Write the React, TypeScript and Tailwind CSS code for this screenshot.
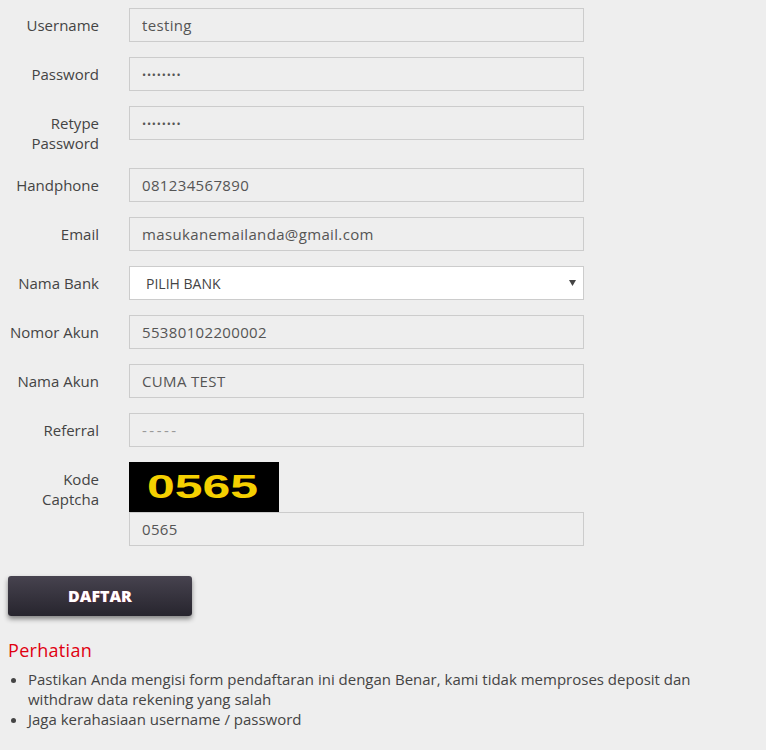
import React from "react";

const font = { fontFamily: '"Open Sans", "Liberation Sans", sans-serif' };

function Row({ label, children }: { label: React.ReactNode; children: React.ReactNode }) {
  return (
    <div className="flex gap-[30px] mb-[15px]">
      <div className="w-[99px] shrink-0 text-right pt-[7px] text-[15px] leading-[20px] text-[#444] whitespace-nowrap">{label}</div>
      <div className="w-[455px]">{children}</div>
    </div>
  );
}

function Field({ value, type = "text", placeholder, extra = "" }: { value?: string; type?: string; placeholder?: string; extra?: string }) {
  return (
    <input
      type={type}
      readOnly
      value={value ?? ""}
      placeholder={placeholder}
      className={"block w-full h-[34px] px-[12px] bg-[#eeeeee] border border-[#cccccc] text-[#555] placeholder:text-[#999] outline-none " + extra}
      style={font}
    />
  );
}

const txt = "text-[15px] tracking-[0.35px]";
const pw = "text-[11px] tracking-[0.8px]";

export default function App() {
  return (
    <div className="min-h-[750px] w-[766px] bg-[#eeeeee] pt-[8px]" style={font}>
      <Row label="Username"><Field value="testing" extra={txt} /></Row>
      <Row label="Password"><Field type="password" value="testing1" extra={pw} /></Row>
      <Row label={<>Retype<br />Password</>}><Field type="password" value="testing1" extra={pw} /></Row>
      <Row label="Handphone"><Field value="081234567890" extra={txt} /></Row>
      <Row label="Email"><Field value="masukanemailanda@gmail.com" extra={txt} /></Row>
      <Row label="Nama Bank">
        <div className="relative h-[34px] w-full bg-white border border-[#cccccc] flex items-center pl-[16px] text-[14px] text-[#444]">
          PILIH BANK
          <svg className="absolute right-[7px] top-[13px]" width="7" height="6" viewBox="0 0 7 6">
            <path d="M0 0 H7 L3.5 6 Z" fill="#444" />
          </svg>
        </div>
      </Row>
      <Row label="Nomor Akun"><Field value="55380102200002" extra={txt} /></Row>
      <Row label="Nama Akun"><Field value="CUMA TEST" extra={txt} /></Row>
      <Row label="Referral"><Field placeholder="-----" extra={txt + " placeholder:tracking-[2.5px]"} /></Row>
      <Row label={<>Kode<br />Captcha</>}>
        <div className="w-[150px] h-[50px] bg-black">
          <svg width="150" height="50" viewBox="0 0 150 50">
            <text
              x="18"
              y="36"
              textLength="111"
              lengthAdjust="spacingAndGlyphs"
              fill="#f5d000"
              fontSize="34"
              fontWeight="900"
              fontFamily='"Liberation Sans", Arial, sans-serif'
            >
              0565
            </text>
          </svg>
        </div>
        <Field value="0565" extra={txt} />
      </Row>
      <div className="pt-[15px] pl-[8px]">
        <button
          className="w-[184px] h-[40px] rounded-[3px] bg-gradient-to-b from-[#47434f] to-[#27252e] text-white font-extrabold text-[16px] shadow-[0_3px_5px_rgba(0,0,0,0.45)] [text-shadow:0_0_1px_#b02040]"
          style={font}
        >
          DAFTAR
        </button>
      </div>
      <div className="mt-[21px] pl-[8px] text-[#e00010] text-[18px] leading-[26px] tracking-[0.3px]">Perhatian</div>
      <ul className="mt-[6px] pl-[28px] pr-[60px] list-disc text-[15px] leading-[20px] text-[#444]">
        <li>Pastikan Anda mengisi form pendaftaran ini dengan Benar, kami tidak memproses deposit dan withdraw data rekening yang salah</li>
        <li>Jaga kerahasiaan username / password</li>
      </ul>
    </div>
  );
}
